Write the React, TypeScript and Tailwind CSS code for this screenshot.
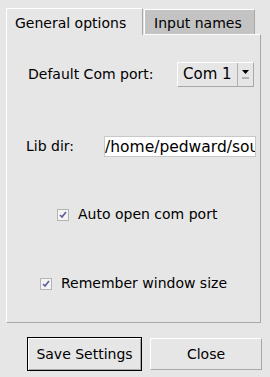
import React, { useState } from 'react';

const CheckBox: React.FC<{ checked: boolean; onChange: () => void }> = ({ checked, onChange }) => (
  <span
    onClick={onChange}
    className="w-[12px] h-[12px] bg-[#f4f4f4] border border-[#b4b4b4] flex items-center justify-center shrink-0"
  >
    {checked && (
      <svg width="8" height="8" viewBox="0 0 8 8">
        <path d="M1 4 L3 6 L7 1" stroke="#5c5c9c" strokeWidth="1.6" fill="none" />
      </svg>
    )}
  </span>
);

const App: React.FC = () => {
  const [autoOpen, setAutoOpen] = useState(true);
  const [remember, setRemember] = useState(true);
  const [libDir, setLibDir] = useState('/home/pedward/source/lib');

  return (
    <div
      className="w-[270px] h-[377px] bg-[#e6e6e6] text-black text-[14px] pt-[7px] pl-[6px] overflow-hidden"
      style={{ fontFamily: '"DejaVu Sans", Verdana, sans-serif' }}
    >
      {/* Tabs */}
      <div className="flex items-end h-[27px]">
        <div className="relative z-10 w-[137px] h-[27px] -mb-px bg-[#e6e6e6] border-t border-l border-white border-r border-r-[#a8a8a8] pl-[8px] pt-[4px] leading-[20px]">
          General options
        </div>
        <div className="w-[111px] h-[25px] ml-px bg-[#c3c3c3] border-t border-l border-white border-r border-r-[#a8a8a8] pl-[9px] pt-[3px] leading-[20px]">
          Input names
        </div>
      </div>

      {/* Panel */}
      <div className="w-[255px] h-[289px] border-t border-l border-white border-r border-b border-r-[#a8a8a8] border-b-[#a8a8a8] flex flex-col">
        <div className="flex items-center mt-[27px] pl-[21px]">
          <span className="w-[149px]">Default Com port:</span>
          <div className="w-[77px] h-[25px] flex border border-t-white border-l-white border-r-[#a8a8a8] border-b-[#a8a8a8]">
            <span className="flex-1 pl-[5px] leading-[23px] text-[15px]">Com 1</span>
            <span className="w-[16px] border-l border-[#b0b0b0] flex flex-col items-center justify-center gap-[3px]">
              <svg width="7" height="4" viewBox="0 0 7 4">
                <path d="M0 0 H7 L3.5 4 Z" fill="#000" />
              </svg>
              <span className="w-[7px] h-[2px] bg-[#b4b4b4]" />
            </span>
          </div>
        </div>

        <div className="flex items-center mt-[49px] pl-[19px]">
          <span className="w-[78px]">Lib dir:</span>
          <input
            value={libDir}
            onChange={(e) => setLibDir(e.target.value)}
            className="w-[152px] h-[21px] bg-white border border-[#c8c8c8] px-0 text-[15.5px] leading-[19px] outline-none"
          />
        </div>

        <label className="flex items-center mt-[47px] pl-[50px] gap-[9px]">
          <CheckBox checked={autoOpen} onChange={() => setAutoOpen(!autoOpen)} />
          <span>Auto open com port</span>
        </label>

        <label className="flex items-center mt-[48px] pl-[33px] gap-[9px]">
          <CheckBox checked={remember} onChange={() => setRemember(!remember)} />
          <span>Remember window size</span>
        </label>
      </div>

      {/* Buttons */}
      <div className="flex items-center mt-[14px] pl-[21px] gap-[8px]">
        <button className="w-[115px] h-[34px] border border-black bg-[#e6e6e6] shadow-[inset_1px_1px_0_#fff,inset_-1px_-1px_0_#a8a8a8]">
          Save Settings
        </button>
        <button className="w-[112px] h-[32px] bg-[#e6e6e6] border border-t-white border-l-white border-r-[#a8a8a8] border-b-[#a8a8a8]">
          Close
        </button>
      </div>
    </div>
  );
};

export default App;
